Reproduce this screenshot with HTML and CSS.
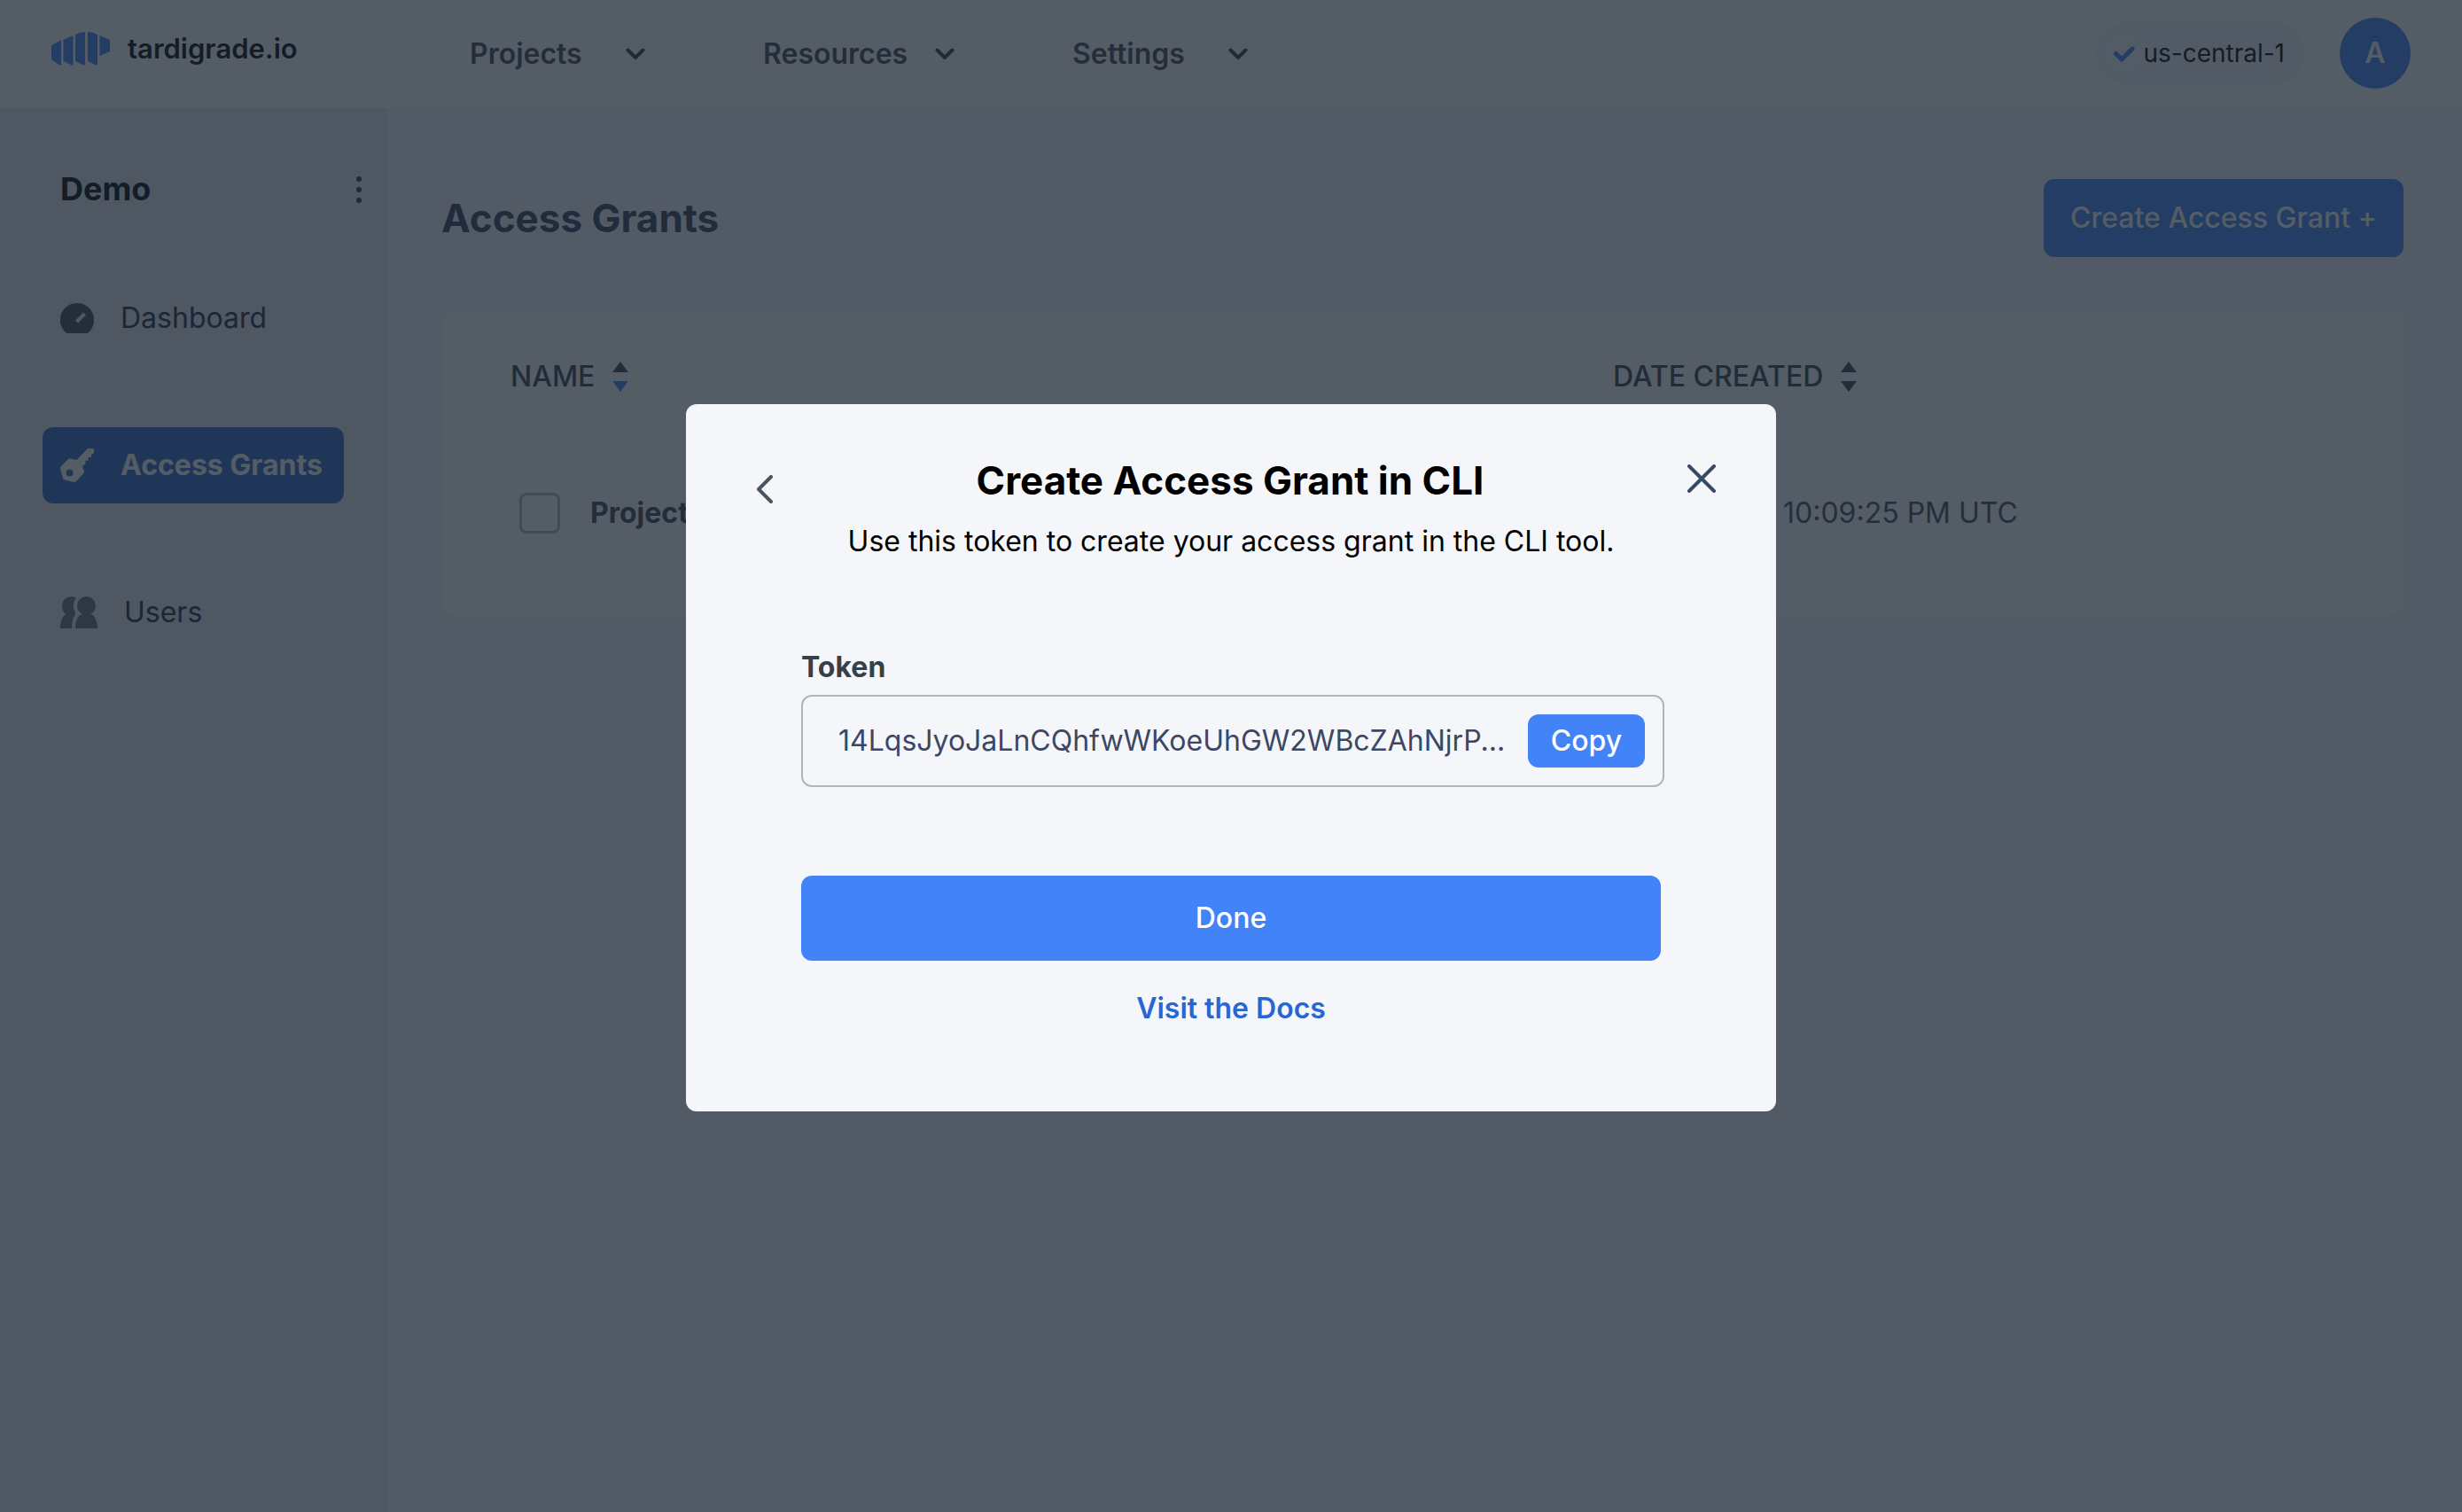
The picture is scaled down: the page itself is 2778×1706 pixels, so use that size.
FILE: index.html
```html
<!DOCTYPE html>
<html lang="en">
<head>
<meta charset="utf-8">
<meta name="viewport" content="width=device-width, initial-scale=1">
<title>Access Grants</title>
<link rel="stylesheet" href="styles.css">
</head>
<body>
<header class="header">
  <a class="logo" href="#">
    <svg class="logo-mark" width="66" height="38" viewBox="0 0 66 38" aria-hidden="true">
      <path d="M0 15 L11 9.500V38 Q8 37 5.500 35 L0 31Z"/>
      <path d="M13.500 9 L24.500 4V36.500Q24 38 22 37L13.500 33Z"/>
      <path d="M27 3Q32 0 38 0V36.500Q37.500 38.500 35.500 37L27 33Z"/>
      <path d="M41 0Q47 0 52 3V36.500Q51.500 38.500 49.500 37L41 33Z"/>
      <path d="M54.500 4L66 9V22L54.500 27Z"/>
    </svg>
    <span>tardigrade.io</span>
  </a>
  <nav class="menu" aria-label="Main">
    <button class="menu-item" type="button">Projects
      <svg width="22" height="14" viewBox="0 0 22 14" aria-hidden="true"><path d="M2.500 2.500L11 11L19.500 2.500"/></svg></button>
    <button class="menu-item" type="button">Resources
      <svg width="22" height="14" viewBox="0 0 22 14" aria-hidden="true"><path d="M2.500 2.500L11 11L19.500 2.500"/></svg></button>
    <button class="menu-item" type="button">Settings
      <svg width="22" height="14" viewBox="0 0 22 14" aria-hidden="true"><path d="M2.500 2.500L11 11L19.500 2.500"/></svg></button>
  </nav>
  <div class="satellite">
    <span class="satellite-check"><svg width="26" height="20" viewBox="0 0 26 20" aria-hidden="true"><path d="M3.500 10.500L10 17L22 5"/></svg></span>
    <span>us-central-1</span>
  </div>
  <button class="avatar" type="button">A</button>
</header>

<div class="layout">
  <aside class="sidebar">
    <div class="project">
      <h2 class="project-name">Demo</h2>
      <button class="icon-button dots" type="button" aria-label="Project menu">
        <svg width="6" height="30" viewBox="0 0 6 30"><circle cx="3" cy="3" r="3"/><circle cx="3" cy="15" r="3"/><circle cx="3" cy="27" r="3"/></svg>
      </button>
    </div>
    <nav class="side-nav" aria-label="Project">
      <a class="side-link" href="#">
        <svg width="38" height="38" viewBox="0 0 38 38" aria-hidden="true"><path fill-rule="evenodd" d="M19 2A19 19 0 0 1 32 35Q31 36 29 36H9Q7 36 6 35A19 19 0 0 1 19 2ZM17 21.500L20 24.500L29 15.500L26 12.500Z"/></svg>
        Dashboard</a>
      <a class="side-link active" href="#" aria-current="page">
        <svg width="38" height="38" viewBox="0 0 38 38" aria-hidden="true"><path fill-rule="evenodd" d="M31 0H38V5L36 6.500H35V10H31.500V13.500H28.500V17L25 20L27 26Q27 27.500 26 28.500L18 37Q17 38 15 38L5 35.500Q3.500 35 3 33.500L0 23Q0 21 1 20L9 12Q10.500 11 12 11.500L18.500 13ZM10.500 23.500A4 4 0 1 0 10.500 31.500A4 4 0 1 0 10.500 23.500Z"/></svg>
        Access Grants</a>
      <a class="side-link" href="#">
        <svg class="people" width="42" height="36" viewBox="0 0 42 36" aria-hidden="true"><circle cx="29.500" cy="10.500" r="10.500"/><path d="M25 19.500H34Q42 23 42 36H17Q17 23 25 19.500Z"/><path d="M18 1.500Q12 9 17 18.500L17.500 20Q13 24 13 36H0Q0 25 6 20Q2 16 2 10.500C2 2 11-2 18 1.500Z"/></svg>
        Users</a>
    </nav>
  </aside>

  <main class="content">
    <div class="title-row">
      <h1 class="page-title">Access Grants</h1>
      <button class="button create" type="button">Create Access Grant +</button>
    </div>
    <table class="grants">
      <thead>
        <tr>
          <th class="col-name" scope="col"><span class="heading">NAME
            <svg width="18" height="34" viewBox="0 0 18 34" aria-hidden="true"><path d="M9 0L18 12H0Z"/><path class="sorted" d="M0 22H18L9 34Z"/></svg></span></th>
          <th scope="col"><span class="heading">DATE CREATED
            <svg width="18" height="34" viewBox="0 0 18 34" aria-hidden="true"><path d="M9 0L18 12H0Z"/><path d="M0 22H18L9 34Z"/></svg></span></th>
        </tr>
      </thead>
      <tbody>
        <tr>
          <td><label class="grant"><input class="check" type="checkbox">Project</label></td>
          <td class="date">10:09:25 PM UTC</td>
        </tr>
      </tbody>
    </table>
  </main>
</div>

<div class="overlay">
  <section class="modal" role="dialog" aria-modal="true" aria-labelledby="modal-title">
    <div class="modal-head">
      <button class="icon-button back" type="button" aria-label="Back">
        <svg width="18" height="32" viewBox="0 0 18 32"><path d="M16 2L2 16L16 30"/></svg>
      </button>
      <h2 class="modal-title" id="modal-title">Create Access Grant in CLI</h2>
      <button class="icon-button close" type="button" aria-label="Close">
        <svg width="32" height="32" viewBox="0 0 32 32"><path d="M2 2L30 30M30 2L2 30"/></svg>
      </button>
    </div>
    <p class="modal-text">Use this token to create your access grant in the CLI tool.</p>
    <div class="modal-body">
      <label class="token-label" for="token">Token</label>
      <div class="token-box">
        <input class="token" id="token" type="text" readonly value="14LqsJyoJaLnCQhfwWKoeUhGW2WBcZAhNjrP...">
        <button class="button copy" type="button">Copy</button>
      </div>
      <button class="button done" type="button">Done</button>
      <a class="docs" href="#">Visit the Docs</a>
    </div>
  </section>
</div>
</body>
</html>
```
FILE: styles.css
```css
* {
  box-sizing: border-box;
}

body {
  margin: 0;
  min-height: 100vh;
  display: flex;
  flex-direction: column;
  background: #f5f6fa;
  color: #000;
  font-family: Inter, "Liberation Sans", sans-serif;
  font-size: 32px;
  line-height: 40px;
}

h1,
h2,
p {
  margin: 0;
}

button,
input {
  font: inherit;
  color: inherit;
}

button {
  border: 0;
  padding: 0;
  background: none;
  cursor: pointer;
}

a {
  color: inherit;
  text-decoration: none;
}

svg {
  display: block;
  flex: none;
}

/* Header */
.header {
  display: flex;
  align-items: center;
  padding: 20px 58px 22px;
  background: #fff;
}

.logo {
  display: flex;
  align-items: center;
  gap: 20px;
  flex: 0 0 472px;
  padding-bottom: 10px;
  font-size: 31px;
  font-weight: 600;
}

.logo-mark {
  fill: #4283f8;
}

.menu {
  display: grid;
  grid-template-columns: 198px 216px 198px;
  gap: 133px;
  flex: 1;
  padding-top: 2px;
}

.menu-item {
  display: flex;
  align-items: center;
  justify-content: space-between;
  font-weight: 600;
  color: #434655;
}

.menu-item path {
  fill: none;
  stroke: #353a4a;
  stroke-width: 4;
  stroke-linecap: round;
  stroke-linejoin: round;
}

.satellite {
  display: flex;
  align-items: center;
  height: 72px;
  padding: 0 22px 0 10px;
  margin-right: 40px;
  border-radius: 36px;
  background: #f5f6fa;
  font-size: 28px;
}

.satellite-check {
  display: flex;
  align-items: center;
  justify-content: center;
  width: 42px;
  height: 44px;
  border-radius: 50%;
  background: #fcfcfe;
}

.satellite-check path {
  fill: none;
  stroke: #4283f8;
  stroke-width: 5;
  stroke-linecap: round;
  stroke-linejoin: round;
}

.avatar {
  width: 80px;
  height: 80px;
  border-radius: 50%;
  background: #4283f8;
  color: #fff;
  font-weight: 600;
}

/* Sidebar */
.layout {
  display: flex;
  flex: 1;
}

.sidebar {
  flex: 0 0 438px;
  padding: 70px 50px 0 48px;
  background: #e6e9ef;
}

.project {
  display: flex;
  align-items: center;
  justify-content: space-between;
  height: 44px;
  margin-right: -20px;
  padding-left: 20px;
}

.project-name {
  margin-bottom: 2px;
  font-size: 36px;
  font-weight: 700;
}

.dots {
  fill: #2a3247;
}

.side-nav {
  display: flex;
  flex-direction: column;
  gap: 80px;
  margin-top: 80px;
}

.side-link {
  display: flex;
  align-items: center;
  gap: 30px;
  height: 86px;
  padding-left: 20px;
  border-radius: 12px;
  color: #252a40;
}

.side-link svg {
  fill: #3f4455;
}

.side-link .people {
  fill: #676b79;
}

.side-link.active {
  background: #3369cb;
  color: #fff;
  font-weight: 700;
}

.side-link.active svg {
  fill: #fff;
}

/* Page */
.content {
  flex: 1;
  padding: 80px 66px 60px 60px;
}

.title-row {
  display: flex;
  align-items: center;
  justify-content: space-between;
  margin-bottom: 62px;
}

.page-title {
  font-size: 44px;
  font-weight: 700;
  line-height: 56px;
  color: #304056;
}

.button {
  border-radius: 12px;
  background: #4283f8;
  color: #fff;
  font-weight: 500;
}

.create {
  width: 406px;
  height: 88px;
}

.grants {
  width: 100%;
  table-layout: fixed;
  border-collapse: separate;
  border-spacing: 0;
  border-radius: 16px;
  background: #fff;
}

.grants th {
  padding: 53px 0 0 78px;
  height: 110px;
  vertical-align: top;
  text-align: left;
  font-weight: 500;
  color: #33404a;
}

.grants .col-name {
  width: 1244px;
}

.heading {
  display: flex;
  align-items: center;
  gap: 20px;
}

.heading svg {
  fill: #3a4254;
}

.heading .sorted {
  fill: #4283f8;
}

.grants td {
  height: 232px;
  padding: 2px 0 0 88px;
  color: #434a5c;
}

.grant {
  display: flex;
  align-items: center;
  gap: 34px;
  font-weight: 700;
  color: #3a4052;
}

.check {
  appearance: none;
  width: 46px;
  height: 46px;
  margin: 0;
  border: 3px solid #b4b8c4;
  border-radius: 8px;
}

.grants .date {
  padding-left: 270px;
}

/* Modal */
.overlay {
  position: fixed;
  inset: 0;
  display: flex;
  align-items: center;
  justify-content: center;
  padding-top: 4px;
  background: rgba(27, 37, 51, 0.75);
}

.modal {
  width: 1230px;
  padding: 60px 68px 96px 80px;
  border-radius: 12px;
  background: #f5f6fa;
}

.modal-head {
  display: flex;
  align-items: center;
  justify-content: space-between;
  height: 52px;
}

.icon-button path {
  fill: none;
  stroke-width: 4;
  stroke-linecap: round;
  stroke-linejoin: round;
}

.back {
  padding-top: 20px;
  stroke: #4b5361;
}

.close {
  padding-bottom: 4px;
  stroke: #3b4b66;
}

.modal-title {
  font-size: 44px;
  font-weight: 700;
}

.modal-text {
  margin-top: 23px;
  margin-right: 12px;
  text-align: center;
}

.modal-body {
  display: flex;
  flex-direction: column;
  margin: 102px 62px 0 50px;
}

.token-label {
  font-weight: 700;
  color: #354049;
}

.token-box {
  display: flex;
  align-items: center;
  gap: 26px;
  height: 104px;
  margin: 11px -4px 0 0;
  padding: 0 20px 0 40px;
  border: 2px solid #afb4c0;
  border-radius: 12px;
}

.token {
  flex: 1;
  min-width: 0;
  padding: 0;
  border: 0;
  outline: 0;
  background: none;
  color: #3b4763;
}

.copy {
  width: 132px;
  height: 60px;
}

.done {
  height: 96px;
  margin-top: 100px;
}

.docs {
  align-self: center;
  margin-top: 34px;
  font-weight: 600;
  color: #2766d3;
}
```
